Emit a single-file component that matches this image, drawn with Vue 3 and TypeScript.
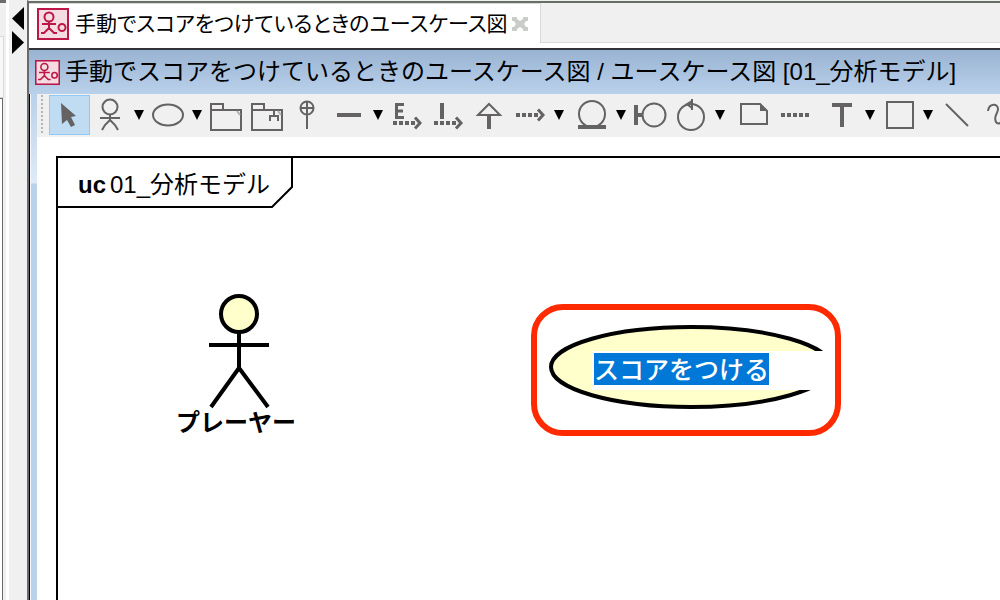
<script setup lang="ts">
import { ref } from 'vue'

type Tool = { id: string; label: string; menu?: boolean; gap?: 'narrow' | 'wide' }

const diagramName = '手動でスコアをつけているときのユースケース図'
const modelName = '01_分析モデル'
const useCaseName = ref('スコアをつける')
const selected = ref('select')

const tools: Tool[] = [
  { id: 'select', label: '選択' },
  { id: 'actor', label: 'アクター', menu: true },
  { id: 'usecase', label: 'ユースケース', menu: true },
  { id: 'package', label: 'パッケージ' },
  { id: 'subsystem', label: 'サブシステム' },
  { id: 'containment', label: '包含' },
  { id: 'association', label: '関連', menu: true },
  { id: 'extend', label: '拡張' },
  { id: 'include', label: 'インクルード' },
  { id: 'generalization', label: '汎化' },
  { id: 'dependency', label: '依存', menu: true },
  { id: 'entity', label: 'エンティティ', menu: true, gap: 'narrow' },
  { id: 'boundary', label: 'バウンダリ' },
  { id: 'control', label: 'コントロール', menu: true },
  { id: 'note', label: 'ノート', gap: 'narrow' },
  { id: 'anchor', label: 'ノートアンカー' },
  { id: 'text', label: 'テキスト', menu: true, gap: 'wide' },
  { id: 'rect', label: '矩形', menu: true },
  { id: 'line', label: '直線' },
  { id: 'freehand', label: 'フリーハンド' }
]
</script>

<template>
  <div class="app">
    <aside class="side">
      <div class="side-head"></div>
      <div class="side-tab"></div>
      <div class="side-body"></div>
    </aside>
    <div class="splitter">
      <button type="button" class="collapse" aria-label="左へ">
        <svg width="12" height="24" viewBox="0 0 12 24"><path d="M12 0V23L0 11.500Z" /></svg>
      </button>
      <button type="button" class="collapse" aria-label="右へ">
        <svg width="12" height="24" viewBox="0 0 12 24"><path d="M0 0V23L12 11.500Z" /></svg>
      </button>
    </div>

    <main class="editor">
      <div class="tabs">
        <div class="tab">
          <svg class="logo large" viewBox="0 0 32 32">
            <rect x="1" y="1" width="30" height="30" class="logo-box" />
            <circle cx="12" cy="9" r="4.500" />
            <path d="M5 16H19M12 14V20M12 20L7 25H4M12 20L17 25H20" />
            <circle cx="25" cy="19.500" r="3.500" />
          </svg>
          <span class="tab-name">{{ diagramName }}</span>
          <button type="button" class="close" aria-label="閉じる">
            <svg width="16" height="16" viewBox="0 0 16 16">
              <path d="M0 1H5V3L8 5L11 3V1H16V5H14L12 8L14 11H16V15H11V13L8 11L5 13V15H0V11H2L4 8L2 5H0Z" />
            </svg>
          </button>
        </div>
        <div class="tab-rest"></div>
      </div>

      <header class="title">
        <svg class="logo small" viewBox="0 0 32 32">
          <rect x="1" y="1" width="30" height="30" class="logo-box" />
          <circle cx="12" cy="9" r="4.500" />
          <path d="M5 16H19M12 14V20M12 20L7 25H4M12 20L17 25H20" />
          <circle cx="25" cy="19.500" r="3.500" />
        </svg>
        <span>{{ diagramName }} / ユースケース図 [{{ modelName }}]</span>
      </header>

      <div class="window">
        <div class="edge"></div>
        <div class="content">
          <div class="toolbar" role="toolbar" aria-label="ツール">
            <span class="grip"></span>
            <template v-for="t in tools" :key="t.id">
              <button
                type="button"
                class="tool"
                :class="[t.gap, { active: selected === t.id }]"
                :aria-label="t.label"
                @click="selected = t.id"
              >
                <svg width="41" height="40" viewBox="0 0 41 40">
                  <path v-if="t.id === 'select'" class="solid" d="M12 8L27 21L22 22L26 30L22 32L18 25L13 29Z" />
                  <g v-else-if="t.id === 'actor'">
                    <circle cx="20" cy="12" r="7.500" />
                    <path d="M10 23H30M20 20V25M20 25L15 30L12 35M20 25L25 30L28 35" />
                  </g>
                  <ellipse v-else-if="t.id === 'usecase'" cx="20" cy="20" rx="15" ry="10.500" />
                  <g v-else-if="t.id === 'package'">
                    <path d="M5 35V9H17V15H35V35ZM5 15H17" />
                    <path class="faint" d="M31 16L34 20" />
                  </g>
                  <g v-else-if="t.id === 'subsystem'">
                    <path d="M5 35V9H17V15H35V35ZM5 15H17M27 16V21M23 26V21H31V26" />
                    <path class="faint" d="M31 16L34 20" />
                  </g>
                  <path v-else-if="t.id === 'containment'" d="M19 7V34M13 13H25M19 6.500A6.500 6.500 0 1 0 19 19.500A6.500 6.500 0 1 0 19 6.500" />
                  <path v-else-if="t.id === 'association'" class="bold" d="M8 20H32" />
                  <g v-else-if="t.id === 'extend'">
                    <path class="mid" d="M17 9.500H9.500V22.500H17M9 16H16" />
                    <path class="dash" d="M6 28H28" />
                    <path class="mid" d="M28 22.500L33 28L28 33.500" />
                  </g>
                  <g v-else-if="t.id === 'include'">
                    <path class="bold" d="M14 8V24" />
                    <path class="dash" d="M6 28H28" />
                    <path class="mid" d="M28 22.500L33 28L28 33.500" />
                  </g>
                  <g v-else-if="t.id === 'generalization'">
                    <path d="M9 20L20 9L31 20Z" />
                    <path class="bold" d="M20 20V34" />
                  </g>
                  <g v-else-if="t.id === 'dependency'">
                    <path class="dash" d="M6 20H28" />
                    <path class="mid" d="M28 14.500L33 20L28 25.500" />
                  </g>
                  <g v-else-if="t.id === 'entity'">
                    <circle cx="20" cy="19" r="13" />
                    <path class="bold" d="M6 32H34" />
                  </g>
                  <g v-else-if="t.id === 'boundary'">
                    <circle cx="24" cy="20" r="11.500" />
                    <path class="bold" d="M6 10V30M6 20H12" />
                  </g>
                  <g v-else-if="t.id === 'control'">
                    <circle cx="20" cy="22" r="13" />
                    <path d="M21 4V15M21 6L16 9L21 13" />
                  </g>
                  <g v-else-if="t.id === 'note'">
                    <path d="M8 9H27L34 16V29H8Z" />
                    <path class="solid" d="M27 8V16H34Z" />
                  </g>
                  <path v-else-if="t.id === 'anchor'" class="dash" d="M7 20H35" />
                  <path v-else-if="t.id === 'text'" class="bold" d="M11 10H31M21 10V32" />
                  <rect v-else-if="t.id === 'rect'" x="8" y="7" width="26" height="26" />
                  <path v-else-if="t.id === 'line'" d="M9 9L31 31" />
                  <path v-else d="M10 16C11 8 20 8 20 14C20 19 15 21 18 27C19 29 22 29 23 27" />
                </svg>
              </button>
              <button v-if="t.menu" type="button" class="drop" :aria-label="t.label + 'メニュー'">
                <svg width="10" height="10" viewBox="0 0 10 10"><path d="M0 0H10L5 10Z" /></svg>
              </button>
            </template>
          </div>

          <section class="canvas">
            <div class="frame">
              <div class="frame-tag">
                <svg width="235" height="50" viewBox="0 0 235 50">
                  <path d="M0 49H214L234 29V0" />
                </svg>
                <h1><b>uc</b><span>{{ modelName }}</span></h1>
              </div>
            </div>
            <div class="actor">
              <svg width="64" height="118" viewBox="0 0 64 118">
                <circle cx="32" cy="21" r="18" />
                <path d="M32 39V75M2 52H62M4 114L32 75L61 114" />
              </svg>
              <span>プレーヤー</span>
            </div>
            <div class="usecase">
              <svg width="284" height="86" viewBox="0 0 284 86">
                <ellipse cx="142" cy="43" rx="140" ry="40" />
              </svg>
              <div class="field">
                <input v-model="useCaseName" type="text" aria-label="ユースケース名" />
              </div>
            </div>
            <div class="highlight"></div>
          </section>
        </div>
      </div>
    </main>
  </div>
</template>

<style>
body {
  margin: 0;
  overflow: hidden;
}
</style>

<style scoped>
* {
  box-sizing: border-box;
}
.app {
  display: flex;
  height: 100vh;
  overflow: hidden;
  background: #f0f0f0;
  color: #000;
  font-family: "Liberation Sans", "Noto Sans CJK JP", sans-serif;
}
button {
  flex: none;
  padding: 0;
  border: 0;
  background: none;
}
svg {
  display: block;
  flex: none;
}
.side {
  flex: none;
  display: flex;
  flex-direction: column;
  width: 9px;
  border-right: 3px solid #fff;
  background: #f0f0f0;
}
.side-head {
  height: 36px;
  border-top: 3px solid #696e69;
}
.side-tab {
  width: 4px;
  height: 62px;
  border: 1px solid #d9d9d9;
  border-left: 0;
  background: #f8f8f8;
}
.side-body {
  flex: 1;
  width: 3px;
  border-top: 1px solid #696969;
  border-right: 1px solid #696969;
  background: #fff;
}
.splitter {
  flex: none;
  width: 18px;
  padding: 7px 3px;
}
.collapse {
  display: block;
  width: 12px;
  height: 24px;
}
.editor {
  flex: 1;
  display: flex;
  flex-direction: column;
  min-width: 0;
  border-top: 1px solid #f0f0f0;
  border-left: 2px solid #696969;
}
.tabs {
  flex: none;
  display: flex;
  height: 49px;
  border-top: 2px solid #696e69;
  border-bottom: 2px solid #303438;
  background: #fff;
}
.tab {
  flex: none;
  display: flex;
  align-items: center;
  height: 40px;
  padding: 0 12px 0 8px;
  border-top: 1px solid #d9d9d9;
  border-right: 1px solid #d9d9d9;
}
.tab-rest {
  flex: 1;
  height: 40px;
  border-bottom: 1px solid #d9d9d9;
  background: #f0f0f0;
}
.logo {
  fill: none;
  stroke: #bd1747;
  stroke-width: 2;
}
.logo-box {
  fill: #f5dce2;
}
.large {
  width: 32px;
  height: 32px;
}
.small {
  width: 25px;
  height: 25px;
}
.tab-name {
  margin-left: 6px;
  font-size: 21px;
  line-height: 32px;
  font-feature-settings: "palt";
  white-space: nowrap;
}
.close {
  margin-left: 4px;
}
.close path {
  fill: #c9cdca;
}
.title {
  flex: none;
  display: flex;
  align-items: center;
  gap: 5px;
  height: 44px;
  padding-left: 6px;
  background: linear-gradient(#99b3d2, #bad1eb);
  font-size: 24px;
  line-height: 36px;
  white-space: nowrap;
}
.window {
  flex: 1;
  display: flex;
  min-height: 0;
  border-left: 1px solid #000;
}
.edge {
  flex: none;
  width: 7px;
  border-left: 1px solid #f5f9fd;
  background: linear-gradient(#b9d1ea 0, #dfeaf7 89px, #b9d1ea 90px);
}
.content {
  flex: 1;
  display: flex;
  flex-direction: column;
  min-width: 0;
}
.toolbar {
  flex: none;
  display: flex;
  height: 43px;
  padding: 1px 0 2px 4px;
  background: #f0f0f0;
  overflow: hidden;
}
.grip {
  flex: none;
  width: 2px;
  margin-right: 6px;
  background: repeating-linear-gradient(#b5b5b5 0 2px, #f0f0f0 2px 4px);
}
.tool {
  width: 41px;
  height: 40px;
}
.tool.active {
  background: #c0dcf3;
  box-shadow: inset 0 0 0 1px #90c8f6;
}
.tool.narrow {
  margin-left: 4px;
}
.tool.wide {
  margin-left: 6px;
}
.tool svg {
  fill: none;
  stroke: #646262;
  stroke-width: 2;
}
.tool .solid {
  fill: #646262;
  stroke: none;
}
.tool .bold {
  stroke-width: 4;
}
.tool .mid {
  stroke-width: 3;
}
.tool .faint {
  stroke: #b0b0b0;
}
.tool .dash {
  stroke-width: 4;
  stroke-dasharray: 4 2;
}
.drop {
  display: flex;
  align-items: center;
  justify-content: center;
  width: 17px;
  height: 40px;
  padding-right: 1px;
}
.canvas {
  flex: 1;
  position: relative;
  display: flex;
  min-height: 0;
  padding: 19px 0 0 19px;
  background: #fff;
}
.frame {
  flex: 1;
  border-top: 2px solid #000;
  border-left: 2px solid #000;
}
.frame-tag {
  display: grid;
  width: 235px;
}
.frame-tag > * {
  grid-area: 1 / 1;
}
.frame-tag path {
  fill: none;
  stroke: #000;
  stroke-width: 2;
}
h1 {
  display: flex;
  gap: 4px;
  margin: 0;
  padding: 9px 0 0 20px;
  font-size: 24px;
  font-weight: 400;
  line-height: 36px;
  white-space: nowrap;
}
.actor {
  position: absolute;
  left: 139px;
  top: 156px;
  display: flex;
  flex-direction: column;
  align-items: center;
  font-size: 24px;
  font-weight: 700;
  line-height: 24px;
}
.actor svg {
  margin-left: 6px;
}
.actor circle,
.usecase ellipse {
  fill: #ffffcc;
  stroke: #000;
  stroke-width: 4;
}
.actor path {
  fill: none;
  stroke: #000;
  stroke-width: 4;
}
.usecase {
  position: absolute;
  left: 512px;
  top: 187px;
}
.field {
  position: absolute;
  left: 43px;
  top: 27px;
  width: 242px;
  height: 39px;
  padding: 2px;
  background: #fff;
}
.field input {
  display: block;
  width: 175px;
  height: 32px;
  padding: 0 0 2px;
  border: 0;
  outline: 0;
  background: #0078d7;
  color: #fff;
  font: 500 25px "Noto Sans CJK JP", sans-serif;
}
.highlight {
  position: absolute;
  left: 494px;
  top: 167px;
  width: 310px;
  height: 132px;
  border: 6px solid #ff2a00;
  border-radius: 32px;
  pointer-events: none;
}
</style>
